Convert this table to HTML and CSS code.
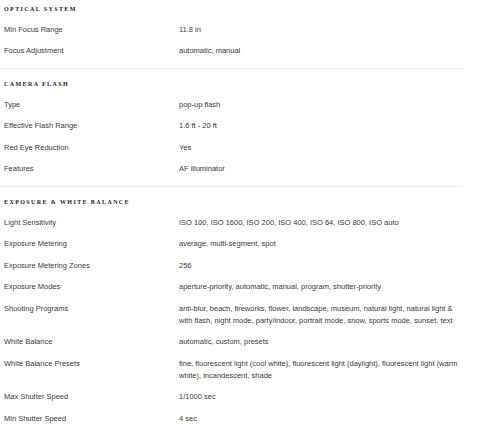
FILE: index.html
```html
<!DOCTYPE html>
<html lang="en">
<head>
    <meta charset="UTF-8">
    <meta name="viewport" content="width=device-width, initial-scale=1.0">
    <title>Specifications</title>
    <link rel="stylesheet" href="styles.css">
</head>
<body>
    <div class="specs">
        <section class="spec-group">
            <h3>Optical System</h3>
            <div class="spec-row"><div class="spec-name">Min Focus Range</div><div class="spec-value">11.8 in</div></div>
            <div class="spec-row"><div class="spec-name">Focus Adjustment</div><div class="spec-value">automatic, manual</div></div>
        </section>
        <section class="spec-group">
            <h3>Camera Flash</h3>
            <div class="spec-row"><div class="spec-name">Type</div><div class="spec-value">pop-up flash</div></div>
            <div class="spec-row"><div class="spec-name">Effective Flash Range</div><div class="spec-value">1.6 ft - 20 ft</div></div>
            <div class="spec-row"><div class="spec-name">Red Eye Reduction</div><div class="spec-value">Yes</div></div>
            <div class="spec-row"><div class="spec-name">Features</div><div class="spec-value">AF illuminator</div></div>
        </section>
        <section class="spec-group">
            <h3>Exposure &amp; White Balance</h3>
            <div class="spec-row"><div class="spec-name">Light Sensitivity</div><div class="spec-value">ISO 100, ISO 1600, ISO 200, ISO 400, ISO 64, ISO 800, ISO auto</div></div>
            <div class="spec-row"><div class="spec-name">Exposure Metering</div><div class="spec-value">average, multi-segment, spot</div></div>
            <div class="spec-row"><div class="spec-name">Exposure Metering Zones</div><div class="spec-value">256</div></div>
            <div class="spec-row"><div class="spec-name">Exposure Modes</div><div class="spec-value">aperture-priority, automatic, manual, program, shutter-priority</div></div>
            <div class="spec-row"><div class="spec-name">Shooting Programs</div><div class="spec-value">anti-blur, beach, fireworks, flower, landscape, museum, natural light, natural light &amp; with flash, night mode, party/indoor, portrait mode, snow, sports mode, sunset, text</div></div>
            <div class="spec-row"><div class="spec-name">White Balance</div><div class="spec-value">automatic, custom, presets</div></div>
            <div class="spec-row"><div class="spec-name">White Balance Presets</div><div class="spec-value">fine, fluorescent light (cool white), fluorescent light (daylight), fluorescent light (warm white), incandescent, shade</div></div>
            <div class="spec-row"><div class="spec-name">Max Shutter Speed</div><div class="spec-value">1/1000 sec</div></div>
            <div class="spec-row"><div class="spec-name">Min Shutter Speed</div><div class="spec-value">4 sec</div></div>
        </section>
    </div>
</body>
</html>
```

FILE: styles.css
```css
body {
    margin: 0;
    background-color: #ffffff;
    font-family: "Liberation Sans", Arial, sans-serif;
    color: #3a3a3a;
}

.specs {
    width: 463px;
}

.spec-group {
    padding: 9px 0 6px;
    border-bottom: 1px solid #ececec;
}

.spec-group:first-child {
    padding-top: 3px;
}

.spec-group h3 {
    margin: 0 0 4px;
    padding-left: 4px;
    font-family: "Liberation Serif", "Times New Roman", serif;
    font-size: 6px;
    font-weight: bold;
    line-height: 12px;
    letter-spacing: 1.4px;
    text-transform: uppercase;
    color: #222222;
}

.spec-row {
    display: grid;
    grid-template-columns: 175px 1fr;
    padding: 4.75px 0 4.75px 4px;
    font-size: 7.5px;
    line-height: 12px;
}
```
